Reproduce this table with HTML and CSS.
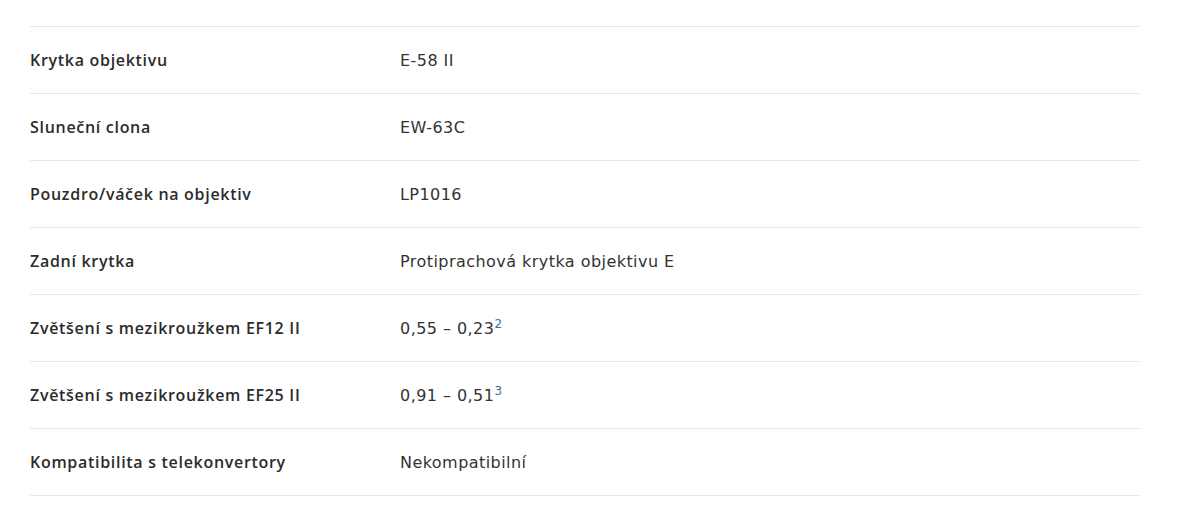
FILE: index.html
```html
<!DOCTYPE html>
<html lang="cs">
<head>
<meta charset="utf-8">
<link rel="stylesheet" href="styles.css">
</head>
<body>
<div class="specs">
  <div class="row"><div class="label">Krytka objektivu</div><div class="value">E-58 II</div></div>
  <div class="row"><div class="label">Sluneční clona</div><div class="value">EW-63C</div></div>
  <div class="row"><div class="label">Pouzdro/váček na objektiv</div><div class="value">LP1016</div></div>
  <div class="row"><div class="label">Zadní krytka</div><div class="value">Protiprachová krytka objektivu E</div></div>
  <div class="row"><div class="label">Zvětšení s mezikroužkem EF12 II</div><div class="value">0,55 – 0,23<sup class="note">2</sup></div></div>
  <div class="row"><div class="label">Zvětšení s mezikroužkem EF25 II</div><div class="value">0,91 – 0,51<sup class="note">3</sup></div></div>
  <div class="row"><div class="label">Kompatibilita s telekonvertory</div><div class="value">Nekompatibilní</div></div>
</div>
</body>
</html>
```
FILE: styles.css
```css
html, body {
  margin: 0;
  padding: 0;
  background: #fff;
}
body {
  font-family: "DejaVu Sans", "Liberation Sans", sans-serif;
  color: #333;
}
.specs {
  margin: 26px 0 0 30px;
  width: 1110px;
  border-bottom: 1px solid #e8e8e8;
}
.row {
  display: flex;
  align-items: center;
  height: 66px;
  border-top: 1px solid #e8e8e8;
}
.label {
  width: 370px;
  font-family: "Open Sans", "DejaVu Sans", sans-serif;
  font-size: 16px;
  font-weight: 600;
  letter-spacing: 0.7px;
  color: #2b2b2b;
}
.value {
  font-size: 16px;
  letter-spacing: 0.45px;
  color: #333;
}
.note {
  font-size: 12px;
  letter-spacing: 0;
  color: #3a6ea5;
  vertical-align: 6px;
  line-height: 0;
}
```
